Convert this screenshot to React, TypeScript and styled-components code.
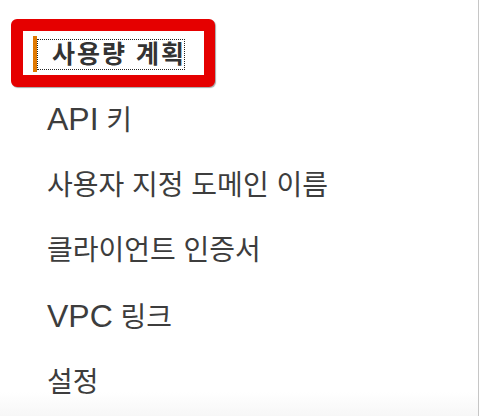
import styled, { createGlobalStyle } from "styled-components";

const GlobalStyle = createGlobalStyle`
    html, body {
        margin: 0;
        padding: 0;
        background: #fff;
    }
    body {
        font-family: "Liberation Sans", "Noto Sans CJK KR", sans-serif;
        color: #3d3d3d;
    }
`

const Latin = styled.span`
    font-size: 32px;
    letter-spacing: 0;
`

type NavItem = {
    id: string;
    label: React.ReactNode;
}

const App = () => {
    const items: NavItem[] = [
        { id: "api-keys", label: <><Latin>API</Latin> 키</> },
        { id: "custom-domains", label: "사용자 지정 도메인 이름" },
        { id: "client-certs", label: "클라이언트 인증서" },
        { id: "vpc-links", label: <><Latin>VPC</Latin> 링크</> },
        { id: "settings", label: "설정" },
    ];

    return (
        <>
            <GlobalStyle />
            <PageLayout>
                <SideNav>
                    <Highlight>
                        <ActiveItem>
                            <ActiveLink href="#usage-plans">사용량 계획</ActiveLink>
                        </ActiveItem>
                    </Highlight>
                    {items.map((item) => (
                        <NavLink key={item.id} href={`#${item.id}`}>{item.label}</NavLink>
                    ))}
                </SideNav>
                <Content />
            </PageLayout>
        </>
    );
};

const PageLayout = styled.div`
    display: flex;
    width: 498px;
    height: 416px;
    overflow: hidden;
`

const SideNav = styled.nav`
    display: flex;
    flex-direction: column;
    width: 479px;
    padding-top: 19px;
    box-sizing: border-box;
    border-right: 1px solid #c6c6c6;
    background: linear-gradient(to bottom, #fff 0, #fff 392px, #f7f7f7 416px);
`

const Highlight = styled.div`
    margin-left: 11px;
    width: 204px;
    height: 74px;
    box-sizing: border-box;
    border: 12px solid #e50000;
    border-right-width: 11px;
    border-radius: 6px;
    box-shadow: 1px 1px 1px rgba(0, 0, 0, 0.35);
    background: #fff;
`

const ActiveItem = styled.div`
    display: flex;
    align-items: center;
    margin: 5px 0 0 10px;
    height: 36px;
    border-left: 4px solid #e07800;
`

const ActiveLink = styled.a`
    display: block;
    width: 148px;
    height: 31px;
    box-sizing: border-box;
    outline: 1px dotted #222;
    outline-offset: -1px;
    padding-left: 15px;
    font-size: 25px;
    font-weight: 700;
    line-height: 30px;
    letter-spacing: 2px;
    color: #333;
    text-decoration: none;
    white-space: nowrap;
`

const NavLink = styled.a`
    display: block;
    padding: 14px 0 15px 47px;
    line-height: 36px;
    font-size: 28px;
    color: #3d3d3d;
    text-decoration: none;
    white-space: nowrap;
`

const Content = styled.main`
    flex: 1;
    background: #fff;
`

export default App;
